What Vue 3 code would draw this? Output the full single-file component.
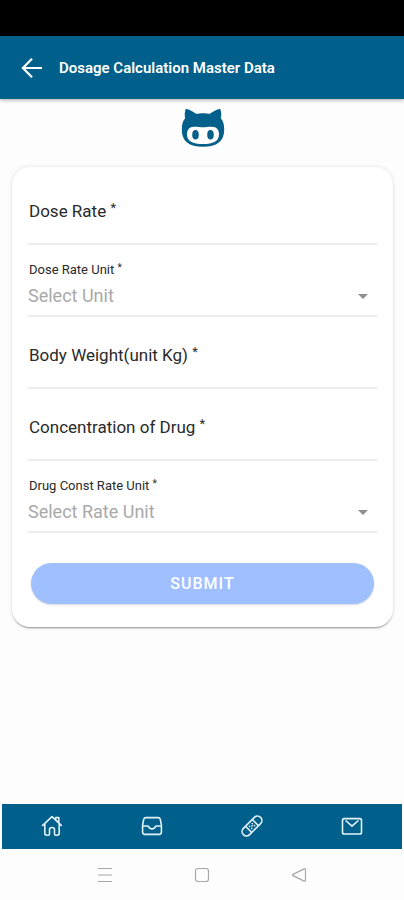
<script setup>
import { ref } from 'vue'

const fields = ref([
  { id: 'dose-rate', label: 'Dose Rate', type: 'text', value: '' },
  { id: 'dose-rate-unit', label: 'Dose Rate Unit', type: 'select', placeholder: 'Select Unit', value: '' },
  { id: 'body-weight', label: 'Body Weight(unit Kg)', type: 'text', value: '' },
  { id: 'concentration', label: 'Concentration of Drug', type: 'text', value: '' },
  { id: 'drug-rate-unit', label: 'Drug Const Rate Unit', type: 'select', placeholder: 'Select Rate Unit', value: '' }
])
</script>

<template>
  <div class="screen">
    <div class="status"></div>
    <header class="header">
      <button class="back" type="button" aria-label="Back">
        <svg width="22" height="22" viewBox="0 0 22 22" fill="none" stroke="currentColor" stroke-width="2.2">
          <path d="M21 11H2.5M11 1.8L1.9 11l9.1 9.2" />
        </svg>
      </button>
      <h1 class="title">Dosage Calculation Master Data</h1>
    </header>

    <main class="main">
      <svg class="logo" width="44" height="40" viewBox="0 0 44 40">
        <path
          fill="#045f8b"
          d="M4.800 2C6.500 1.600 11.500 4 15.200 6.800C19 5.900 25 5.900 28.800 6.800C32.500 4 37.500 1.600 39.200 2C40.400 4.600 40.600 8.500 39.800 11.300C42.400 14.200 43.200 18 43.200 22.500C43.200 34.500 36 39.700 22 39.700S.8 34.500.8 22.500C.8 18 1.600 14.200 4.200 11.300C3.400 8.500 3.600 4.600 4.800 2Z"
        />
        <path
          fill="#fff"
          d="M13 19.800C17 19.800 19 20.300 22 20.300S27 19.800 31 19.800C35.800 19.800 38 23 38 27.200C38 34.300 32.300 37 22 37S6 34.300 6 27.200C6 23 8.200 19.800 13 19.800Z"
        />
        <ellipse cx="14.500" cy="27.800" rx="3.300" ry="4.700" fill="#045f8b" />
        <ellipse cx="29.500" cy="27.800" rx="3.300" ry="4.700" fill="#045f8b" />
      </svg>

      <form class="card" @submit.prevent>
        <div v-for="f in fields" :key="f.id" class="field" :class="f.type">
          <label class="label" :for="f.id">{{ f.label }} <span class="star">*</span></label>
          <input v-if="f.type === 'text'" :id="f.id" v-model="f.value" class="control" type="text" />
          <div v-else class="picker">
            <select :id="f.id" v-model="f.value" class="control">
              <option value="" disabled>{{ f.placeholder }}</option>
            </select>
            <svg class="caret" width="10" height="5" viewBox="0 0 10 5"><path d="M0 0h10L5 5z" fill="#8e8e8e" /></svg>
          </div>
        </div>
        <button class="submit" type="submit">SUBMIT</button>
      </form>
    </main>

    <nav class="tabs" aria-label="Main">
      <a href="#home" class="tab" aria-label="Home">
        <svg width="22" height="22" viewBox="0 0 22 22" class="icon">
          <path d="M1.200 10.800L11 1.700l9.800 9.100M14.800 4.800V2.500h3v5.300M3.800 9v9.300c0 1.200.7 1.900 1.900 1.900h1.700c.7 0 1.100-.4 1.100-1.100v-4.600c0-1.200.9-2 2.500-2s2.500.8 2.500 2v4.600c0 .7.400 1.100 1.100 1.100h1.700c1.200 0 1.900-.7 1.900-1.900V9" />
        </svg>
      </a>
      <a href="#inbox" class="tab" aria-label="Inbox">
        <svg width="22" height="22" viewBox="0 0 22 22" class="icon">
          <path d="M5 2.600h12c1.300 0 2 .6 2.300 1.800l1.100 5.800v6.900c0 1.400-.8 2.300-2.200 2.300H3.800c-1.400 0-2.200-.9-2.200-2.300v-6.900l1.100-5.800C3 3.200 3.700 2.600 5 2.600zM1.600 11h5.600c.7 1.900 2 2.900 3.800 2.900s3.100-1 3.800-2.900h5.600" />
        </svg>
      </a>
      <a href="#care" class="tab" aria-label="Treatment">
        <svg width="26" height="26" viewBox="0 0 26 26" class="icon">
          <g transform="rotate(-45 13 13)">
            <rect x="0.800" y="8.600" width="24.400" height="8.800" rx="4.400" />
            <path d="M8.200 8.600v8.800M17.800 8.600v8.800" />
            <path d="M11 11.500h.1M14.900 11.500h.1M11 14.500h.1M14.900 14.500h.1M13 13h.1" stroke-linecap="round" />
          </g>
        </svg>
      </a>
      <a href="#mail" class="tab" aria-label="Mail">
        <svg width="22" height="22" viewBox="0 0 22 22" class="icon">
          <rect x="1.500" y="3.600" width="19" height="15.400" rx="1.800" />
          <path d="M4.600 5.500L11 11.200l6.400-5.700" />
        </svg>
      </a>
    </nav>

    <div class="system">
      <button class="key" type="button" aria-label="Recent apps">
        <svg width="16" height="16" viewBox="0 0 16 16" class="glyph"><path d="M1 1.500h14M1 8h14M1 14.500h14" /></svg>
      </button>
      <button class="key" type="button" aria-label="Home screen">
        <svg width="16" height="16" viewBox="0 0 16 16" class="glyph"><rect x="1.500" y="1.500" width="13" height="13" rx="2.500" /></svg>
      </button>
      <button class="key" type="button" aria-label="Go back">
        <svg width="16" height="16" viewBox="0 0 16 16" class="glyph"><path d="M14.500 2.700v10.600c0 .8-.6 1.100-1.300.8L2 8.600c-.6-.3-.6-.9 0-1.200l11.200-5.500c.7-.3 1.300 0 1.300.8z" /></svg>
      </button>
    </div>
  </div>
</template>

<style>
body {
  background: #fdfdfd;
}
</style>

<style scoped>
.screen {
  display: flex;
  flex-direction: column;
  min-height: 100vh;
  font-family: Roboto, "Liberation Sans", sans-serif;
  color: #2a2a2a;
}
.screen *,
.screen {
  box-sizing: border-box;
}
button {
  border: 0;
  padding: 0;
  background: none;
  font-family: inherit;
}
svg {
  display: block;
}
.status {
  height: 36px;
  background: #000;
}
.header {
  display: flex;
  align-items: center;
  gap: 16px;
  height: 63px;
  padding: 0 21px;
  background: #005f8b;
  color: #fff;
  box-shadow: 0 1px 4px rgba(0, 0, 0, 0.35);
}
.title {
  margin: 0;
  font-size: 15px;
  line-height: 20px;
  font-weight: 600;
}
.back {
  color: inherit;
}
.main {
  flex: 1;
  display: flex;
  flex-direction: column;
  align-items: center;
  gap: 20px;
  padding: 8px 11px 24px 12px;
}
.card {
  width: 100%;
  padding: 6px 16px 23px;
  border-radius: 18px;
  background: #fff;
  box-shadow: 0 2px 2px -1px rgba(0, 0, 0, 0.4), 0 0 4px rgba(0, 0, 0, 0.12);
}
.field {
  height: 72px;
  display: flex;
  flex-direction: column;
}
.label {
  padding-top: 27px;
  padding-left: 1px;
  font-size: 17px;
  line-height: 22px;
}
.star {
  position: relative;
  top: -5px;
  font-size: 13px;
  line-height: 1;
}
.select .label {
  padding-top: 17px;
  font-size: 13px;
  line-height: 16px;
}
.select .star {
  top: -3px;
  font-size: 10px;
}
.control {
  width: 100%;
  height: 100%;
  margin: 0;
  padding: 0 0 2px;
  border: 0;
  border-bottom: 2px solid #ececec;
  border-radius: 0;
  outline: 0;
  background: transparent;
  font-family: inherit;
  font-size: 18px;
  color: #a9a9a9;
  appearance: none;
}
input.control {
  flex: 1;
  height: auto;
  min-height: 0;
  color: #222;
}
.picker {
  position: relative;
  flex: 1;
}
.caret {
  position: absolute;
  right: 9px;
  top: 50%;
  margin-top: -4px;
  pointer-events: none;
}
.submit {
  display: block;
  width: calc(100% - 6px);
  height: 41px;
  margin: 30px 3px 0;
  border-radius: 21px;
  background: #9fbfff;
  color: #fff;
  font-size: 16px;
  font-weight: 500;
  letter-spacing: 1px;
  box-shadow: 0 1px 2px rgba(0, 0, 0, 0.15);
}
.tabs {
  display: flex;
  height: 45px;
  margin: 0 2px;
  padding-bottom: 1px;
  background: #005f8b;
}
.tab {
  flex: 1;
  display: flex;
  align-items: center;
  justify-content: center;
  color: #e3f3fa;
}
.icon {
  fill: none;
  stroke: currentColor;
  stroke-width: 1.6;
  stroke-linejoin: round;
}
.system {
  display: flex;
  justify-content: center;
  align-items: center;
  gap: 81px;
  height: 51px;
}
.glyph {
  fill: none;
  stroke: #a8a8a8;
  stroke-width: 1.2;
}
</style>
